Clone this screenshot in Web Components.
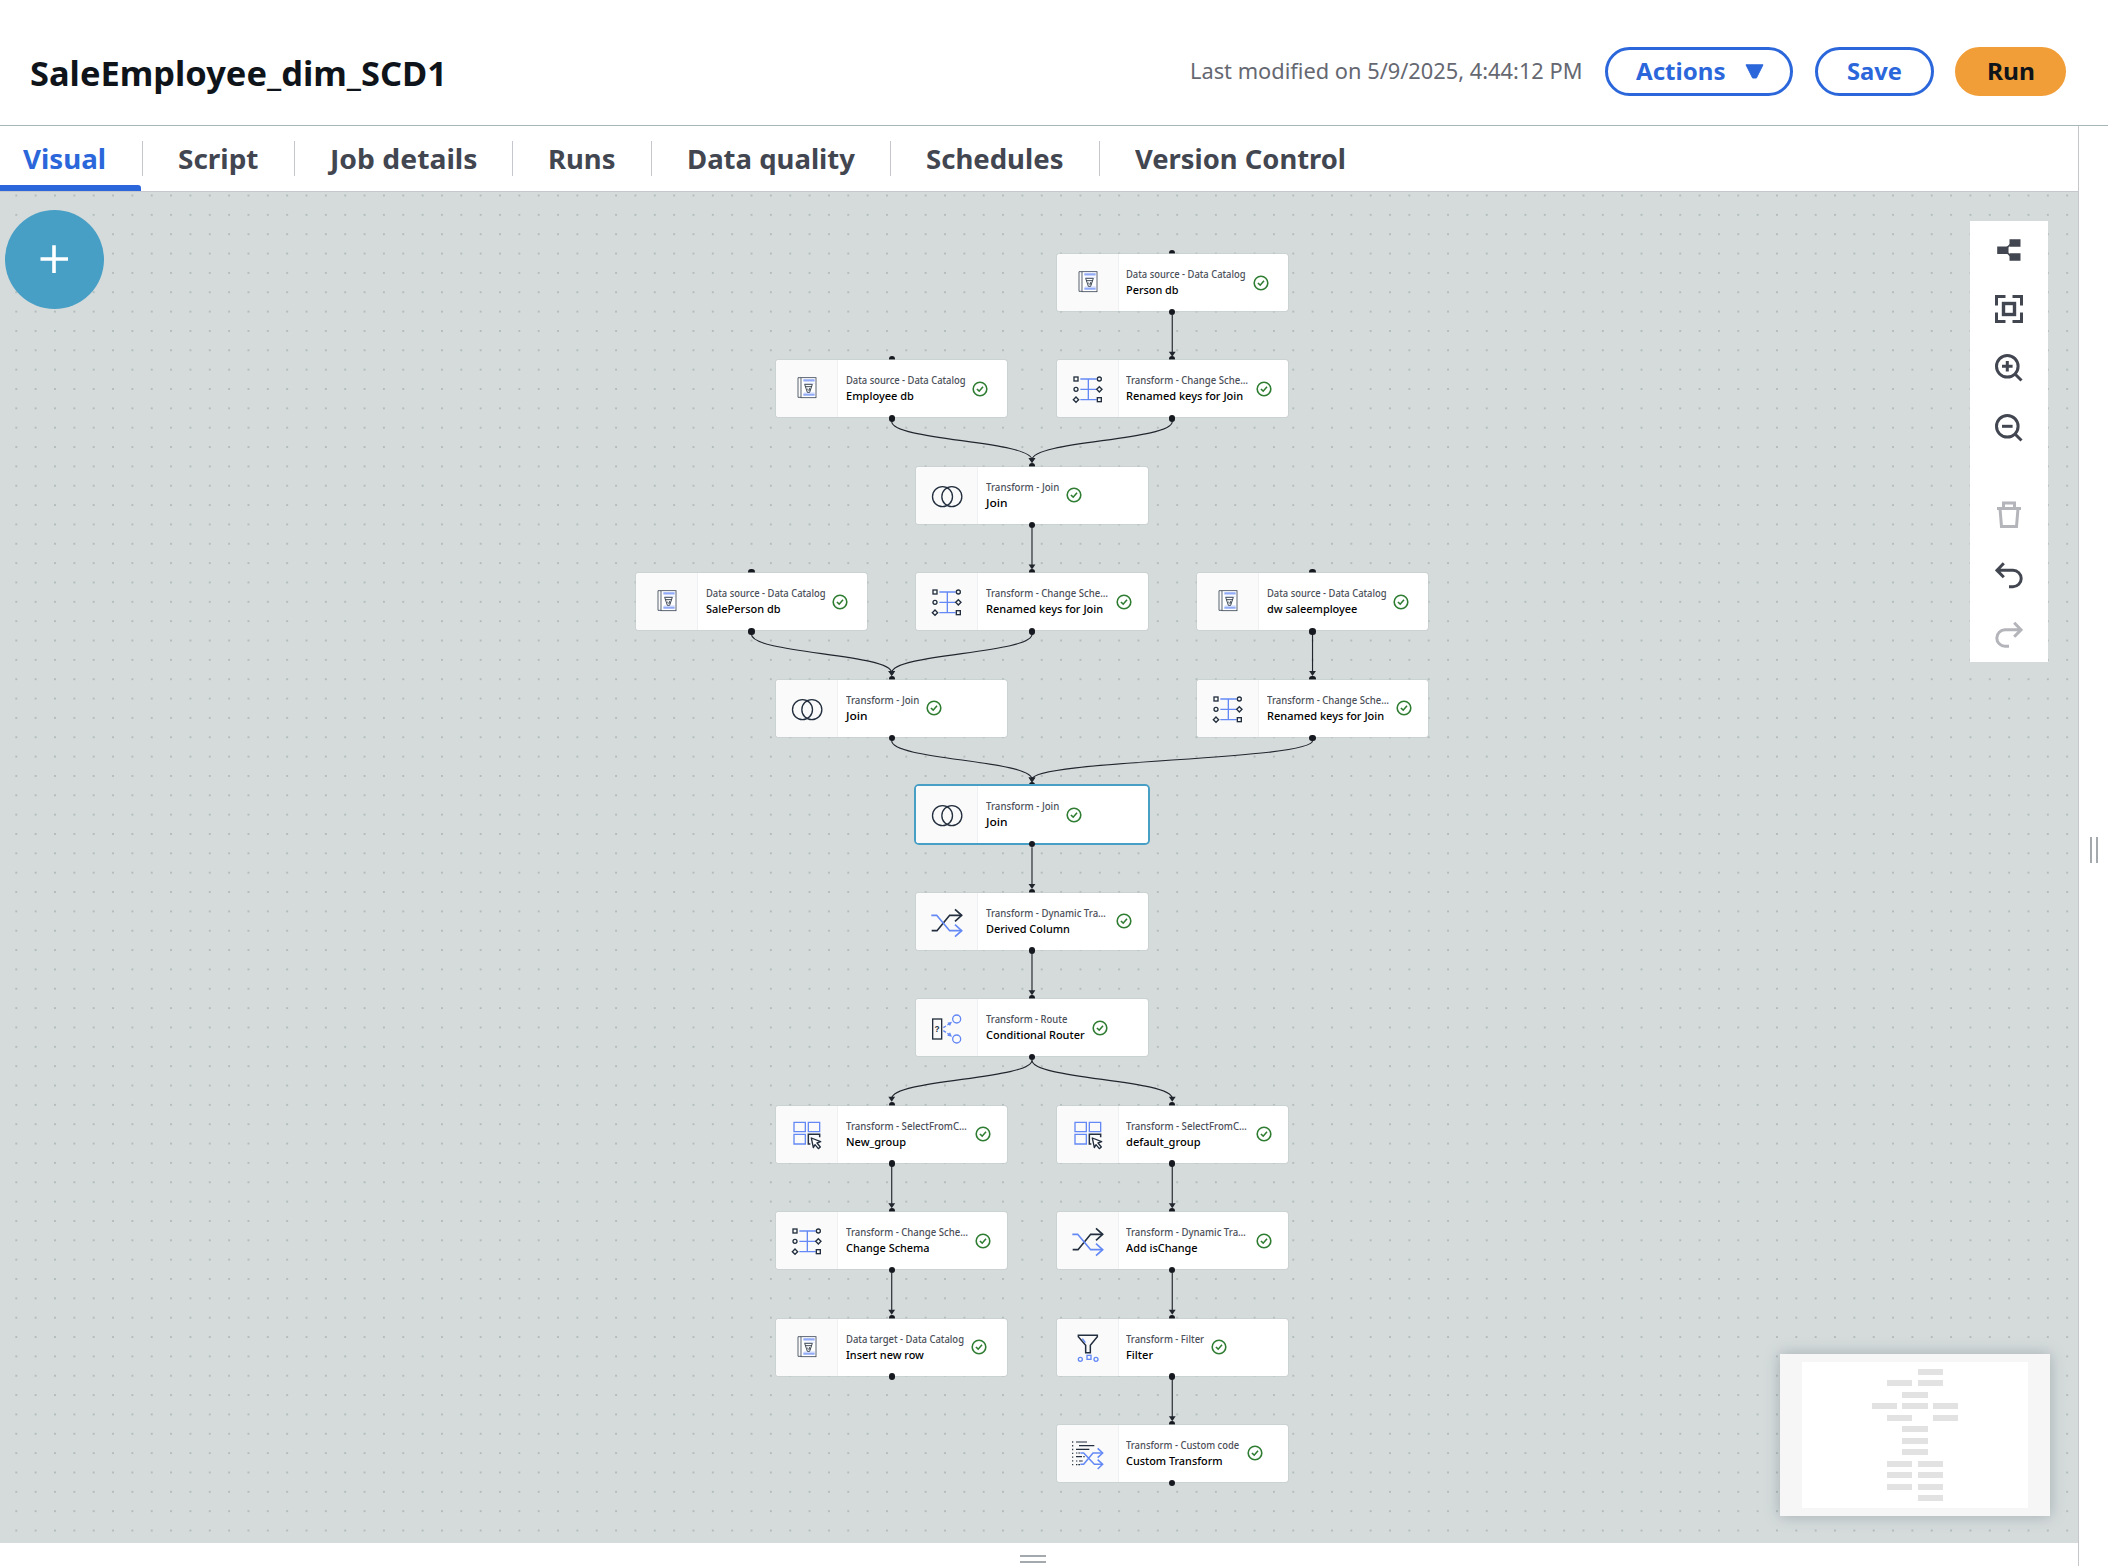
<!DOCTYPE html>
<html lang="en">
<head>
<meta charset="utf-8">
<title>SaleEmployee_dim_SCD1</title>
<style>
html,body{margin:0;height:100%;overflow:hidden;background:#fff}
body{font-family:"Noto Sans","Open Sans",sans-serif;color:#0f141a}
</style>
</head>
<body>
<job-editor></job-editor>
<script>
const define = (name, cls) => customElements.define(name, cls);

/* Text run squeezed or stretched to a given advance width. */
define('fit-text', class extends HTMLElement {
  connectedCallback() {
    const r = this.attachShadow({mode: 'open'});
    const w = +this.getAttribute('w');
    r.innerHTML = `<style>:host{display:block;flex:none;width:${w}px;white-space:pre}
      span{display:inline-block;transform-origin:0 50%;white-space:pre}</style><span>${this.getAttribute('text')}</span>`;
    const s = r.querySelector('span');
    const n = s.getBoundingClientRect().width;
    if (n) s.style.transform = `scaleX(${w / n})`;
  }
});

define('pill-button', class extends HTMLElement {
  connectedCallback() {
    const primary = this.hasAttribute('primary');
    this.attachShadow({mode: 'open'}).innerHTML = `<style>
      :host{display:block;flex:none}
      button{all:unset;box-sizing:border-box;display:flex;align-items:center;justify-content:center;gap:19px;
        width:${this.getAttribute('width')}px;height:49px;border-radius:25px;border:3px solid ${primary ? '#f19e38' : '#2b67db'};
        background:${primary ? '#f19e38' : '#fff'};color:${primary ? '#0f141a' : '#2b67db'};
        font-weight:700;font-size:24px;line-height:43px}
      fit-text{position:relative;top:-1px}
    </style><button><fit-text w="${this.getAttribute('w')}" text="${this.getAttribute('text')}"></fit-text><slot></slot></button>`;
  }
});

define('job-header', class extends HTMLElement {
  connectedCallback() {
    this.attachShadow({mode: 'open'}).innerHTML = `<style>
      :host{display:flex;box-sizing:border-box;height:126px;border-bottom:1px solid #aab7b8;background:#fff;
        padding:18px 42px 0 30px;align-items:flex-start;justify-content:space-between}
      h1{margin:31px 0 0;font-size:34px;line-height:48px;font-weight:700;color:#0f141a}
      .right{display:flex;margin-top:29px;align-items:center}
      .mod{font-size:21.5px;line-height:46px;color:#656871;margin-right:22px;position:relative;top:-1px}
      pill-button+pill-button{margin-left:22px}
      svg{display:block;flex:none;margin-right:-3px}
    </style>
    <h1><fit-text w="417" text="SaleEmployee_dim_SCD1"></fit-text></h1>
    <div class="right">
      <div class="mod"><fit-text w="392.5" text="Last modified on 5/9/2025, 4:44:12 PM"></fit-text></div>
      <pill-button width="188" w="89.5" text="Actions"><svg width="19" height="15" viewBox="0 0 19 15"><path d="M1 .8H18L11.4 14H7.6Z" fill="#2b67db" stroke="#2b67db" stroke-linejoin="round"/></svg></pill-button>
      <pill-button width="119" w="55" text="Save"></pill-button>
      <pill-button primary style="margin-left:21.5px" width="111" w="48" text="Run"></pill-button>
    </div>`;
  }
});

define('job-tabs', class extends HTMLElement {
  connectedCallback() {
    const tabs = [['Visual',83,142.5],['Script',80.5,152.5],['Job details',147.5,218],['Runs',67.5,138.7],['Data quality',168,239.2],['Schedules',137.5,209.2],['Version Control',211,284]];
    this.attachShadow({mode: 'open'}).innerHTML = `<style>
      :host{display:flex;box-sizing:border-box;height:66px;border-bottom:1px solid #c6c6cd;background:#fff}
      .tab{display:flex;box-sizing:border-box;flex:none;position:relative;padding:16px 0 0 35.3px;color:#424650;font-weight:700;font-size:26px;line-height:35px}
      .tab:not(:last-child)::after{content:"";position:absolute;right:0;top:15px;width:1px;height:35px;background:#c6c6cd}
      .tab.on{color:#2b67db;padding-left:23px}
      .tab.on::before{content:"";position:absolute;left:0;right:1.5px;bottom:0;height:6px;background:#2b67db;border-radius:0 3px 0 0}
    </style>` + tabs.map(([t, w, tw], i) => `<div class="tab${i ? '' : ' on'}" style="width:${tw}px"><fit-text w="${w}" text="${t}"></fit-text></div>`).join('');
  }
});

const D = '#232f3e', B = '#6489f5';
const shuffleHead = (y, c, x = 137) => `<path d="M${x-20} ${y-18}L${x} ${y}L${x-20} ${y+18}" stroke="${c}"/>`;
const NODE_ICONS = {
  catalog: `<g stroke="#414d5c" stroke-width="2.6"><path d="M75 53H66V112H75"/><rect x="75" y="53" width="45" height="60" fill="#fff"/></g>
    <path d="M82 61H116M82 104H116" stroke="#91aaf8" stroke-width="7"/><path d="M84 70H116M84 98H116" stroke="#dfe6fd" stroke-width="3"/>
    <path d="M86 73H109L101 97H94ZM88 80H107M95 86L97 92M101 84V92" stroke="${D}" stroke-width="2.6" fill="#fff"/>`,
  schema: `<path d="M70 57H119M70 88H118M70 119H119M94 57V119" stroke="${B}" stroke-width="4"/>
    <g stroke="${D}" stroke-width="4"><rect x="51" y="51" width="12" height="12"/><circle cx="127" cy="57" r="6"/><circle cx="57" cy="88" r="6"/>
    <path d="M127 80L135 88L127 96L119 88ZM57 111L65 119L57 127L49 119Z"/><rect x="121" y="113" width="12" height="12"/></g>`,
  join: `<g stroke="${D}" stroke-width="4"><circle cx="79.5" cy="89" r="30"/><circle cx="107.5" cy="89" r="30"/></g>`,
  shuffle: `<g stroke-width="5"><path d="M47 113H63L101 67H137" stroke="${D}"/>${shuffleHead(67, D)}
    <path d="M46 67H62L101 113H137" stroke="${B}"/>${shuffleHead(113, B)}</g>`,
  router: `<rect x="50" y="60" width="27" height="60" stroke="${D}" stroke-width="4"/>
    <text x="63.5" y="98" text-anchor="middle" font-family="Liberation Sans" font-weight="700" font-size="25" fill="${D}">?</text>
    <g stroke="${B}" stroke-width="4"><circle cx="122" cy="60" r="12"/><circle cx="122" cy="120" r="12"/>
    <path d="M82 86L90 81M94 78L99 75M82 95L90 100M94 103L99 106"/></g>
    <path d="M94 71L108 68L102 81ZM94 110L108 113L102 100Z" fill="${B}"/>`,
  select: `<g stroke-width="4"><path d="M54 49H88V77H54ZM97 49H131V77H97ZM54 85H88V114H54Z" stroke="${B}"/>
    <path d="M103 114H97V85H131V94" stroke="${D}" stroke-width="4.5"/>
    <path d="M106 96L134 107L123 111L133 123L127 128L117 116L112 125Z" stroke="${D}" fill="#fff" stroke-width="4" stroke-linejoin="round"/></g>`,
  filter: `<path d="M64 49H121V53L100 79V101H86V79L64 53Z" stroke="${D}" stroke-width="4.5"/><path d="M76 59L85 71" stroke="${B}" stroke-width="4.5"/>
    <g stroke="${B}" stroke-width="4"><circle cx="70" cy="121" r="6"/><rect x="90" y="109" width="12" height="12"/><circle cx="117" cy="121" r="6"/></g>`,
  custom: `<g stroke="${D}" stroke-width="3.5"><path d="M47 49V121" stroke-dasharray="4 7.3"/>
    <path d="M57 51H90M66 62H112M57 73H97M57 84H61M64 84H69M57 95H75M79 95H83M57 108H61M66 108H77M57 119H61M64 119H69"/></g>
    <g stroke="${B}" stroke-width="4.5"><path d="M70 84H80L112 118H136M70 118H80L108 84H136"/><path d="M122 70L137 84L122 98M122 104L137 118L122 132"/></g>`
};

define('flow-node', class extends HTMLElement {
  connectedCallback() {
    const a = n => this.getAttribute(n);
    const w = Math.max(+a('kw'), +a('nw')), box = /…/.test(a('kind')) ? 122 : w;
    this.attachShadow({mode: 'open'}).innerHTML = `<style>
      :host{display:block;position:absolute;width:231.4px;height:57px}
      .card{box-sizing:border-box;display:flex;height:57px;border-radius:3px;overflow:hidden;background:#fff}
      .frame{position:relative;border-radius:3px;box-shadow:0 0 0 1px #c3cbcc99}
      :host([selected]) .frame{box-shadow:0 0 0 2px #479fc6}
      .icon{flex:none;box-sizing:border-box;width:62px;height:57px;background:#fafafa;border-right:1px solid #eef0f1}
      .icon svg{display:block;width:62px;height:57px}
      .body{display:flex;align-items:flex-start;padding-left:7.8px}
      .texts{width:${box}px;padding-top:13px}
      .kind{font-size:9.9px;line-height:15px;color:#4b4f59;font-weight:500}
      .name{font-size:11.4px;line-height:16.6px;color:#000;font-weight:500}
      .ok{display:block;margin:20.5px 0 0 7.6px}
      .h{position:absolute;left:112.5px;width:6.4px;height:6.4px;border-radius:50%;background:#16191f}
      .top{top:-4px}.bot{top:54.8px}
    </style><i class="h top"></i><div class="frame"><div class="card"><div class="icon"><svg viewBox="0 0 186 171" fill="none">${NODE_ICONS[a('icon')]}</svg></div>
      <div class="body"><div class="texts"><div class="kind"><fit-text w="${+a('kw') + .6}" text="${a('kind')}"></fit-text></div>
      <div class="name"><fit-text w="${+a('nw') + .6}" text="${a('name')}"></fit-text></div></div>
      <svg class="ok" width="16" height="16" viewBox="0 0 16 16" fill="none" stroke="#2f7d32" stroke-width="1.6"><circle cx="8" cy="8" r="6.8"/><path d="M4.9 8L7.2 10.2L11 5.8"/></svg>
      </div></div></div><i class="h bot"></i>`;
  }
});

const K = {cat:['Data source - Data Catalog',119],tgt:['Data target - Data Catalog',117.4],join:['Transform - Join',72.7],sch:['Transform - Change Sche…',121.3],
  dyn:['Transform - Dynamic Tra…',119.3],route:['Transform - Route',80.7],sel:['Transform - SelectFromC…',120.2],fil:['Transform - Filter',77.5],cus:['Transform - Custom code',112.6]};
/* column, row, kind, icon, name, name width */
const NODES = [
  [3,0,'cat','catalog','Person db',52],
  [1,1,'cat','catalog','Employee db',67.3],[3,1,'sch','schema','Renamed keys for Join',116.6],
  [2,2,'join','join','Join',21],
  [0,3,'cat','catalog','SalePerson db',74],[2,3,'sch','schema','Renamed keys for Join',116.6],[4,3,'cat','catalog','dw saleemployee',89.8],
  [1,4,'join','join','Join',21],[4,4,'sch','schema','Renamed keys for Join',116.6],
  [2,5,'join','join','Join',21],
  [2,6,'dyn','shuffle','Derived Column',83.3],
  [2,7,'route','router','Conditional Router',98],
  [1,8,'sel','select','New_group',59.4],[3,8,'sel','select','default_group',74],
  [1,9,'sch','schema','Change Schema',83],[3,9,'dyn','shuffle','Add isChange',71],
  [1,10,'tgt','catalog','Insert new row',77.3],[3,10,'fil','filter','Filter',26.5],
  [3,11,'cus','custom','Custom Transform',96]];
const LINKS = [[3,0,3],[1,1,2],[3,1,2],[2,2,2],[0,3,1],[2,3,1],[4,3,4],[1,4,2],[4,4,2],[2,5,2],[2,6,2],[2,7,1],[2,7,3],[1,8,1],[3,8,3],[1,9,1],[3,9,3],[3,10,3]];
const TOP = 192;
const nx = c => 635.75 + c * 140.27, ny = r => 254 - TOP + r * 106.45;

define('flow-edges', class extends HTMLElement {
  connectedCallback() {
    const g = 19.348;
    const paths = LINKS.map(([c, r, c2]) => {
      const x1 = nx(c) + 115.7, y1 = ny(r) + 61, x2 = nx(c2) + 115.7, y2 = ny(r + 1) - 7, m = (y1 + y2) / 2;
      return `<path d="M${x1} ${y1}C${x1} ${m} ${x2} ${m} ${x2} ${y2}" fill="none" stroke="#21262e" stroke-width="1.15"/>
        <path d="M${x2 - 3.4} ${y2 - 1.8}H${x2 + 3.4}L${x2} ${y2 + 3.2}Z" fill="#21262e"/>`;
    }).join('');
    this.attachShadow({mode: 'open'}).innerHTML = `<style>:host{display:block;position:absolute;inset:0}svg{display:block;width:100%;height:100%}</style>
      <svg><defs><pattern id="dots" x="${16.3 - g / 2}" y="${195.5 - TOP - g / 2}" width="${g}" height="${g}" patternUnits="userSpaceOnUse"><circle cx="${g/2}" cy="${g/2}" r=".7" fill="#7f8b8c"/></pattern></defs>
      <rect width="100%" height="100%" fill="url(#dots)"/>${paths}</svg>`;
  }
});

define('canvas-toolbar', class extends HTMLElement {
  connectedCallback() {
    const lens = `<circle cx="12.3" cy="12.3" r="10.8"/><path d="M20 20L26.5 26.5"/>`;
    const icons = [
      [`<path d="M2.2 10.4H13.5V18H2.2ZM14.5 3.2H25.5V10.8H14.5ZM14.5 17.2H25.5V24.8H14.5Z" fill="currentColor" stroke="none"/><path d="M11.5 12L16.5 7.5M11.5 16L16.5 21" stroke-width="1.6"/>`],
      [`<path d="M1.5 10.5V1.5H10.5M17.5 1.5H26.5V10.5M26.5 17.5V26.5H17.5M10.5 26.5H1.5V17.5"/><rect x="8.5" y="8.5" width="11" height="11" stroke-width="3.4"/>`],
      [`${lens}<path d="M7 12.3H17.6M12.3 7V17.6"/>`],
      [`${lens}<path d="M7 12.3H17.6"/>`],
      [`<path d="M2 7.5H26M8.5 6V2H19.5V6M5 7.5L6.5 25.5H21.5L23 7.5"/>`, 'off gap'],
      [`<path d="M8.8 2.2L2 9.3L8.8 16.3M2 9.3H18A8.2 8.2 0 0 1 18 25.7H14"/>`],
      [`<path d="M19.2 2.7L26 9.8L19.2 16.8M26 9.8H10A8.2 8.2 0 0 0 10 26.2H14"/>`, 'off']];
    this.attachShadow({mode: 'open'}).innerHTML = `<style>
      :host{display:flex;flex-direction:column;position:absolute;right:30px;top:29px;width:78px;height:441px;box-sizing:border-box;background:#fff;color:#424650}
      div{height:59.6px;flex:none;display:flex;align-items:center;justify-content:center}
      div:first-of-type{height:58px}
      .off{color:#b4b4bb}.gap{margin-top:27.6px}
      svg{display:block}
    </style>` + icons.map(([p, c = '']) => `<div class="${c}"><svg width="28" height="28" viewBox="0 0 28 28" fill="none" stroke="currentColor" stroke-width="3">${p}</svg></div>`).join('');
  }
});

define('mini-map', class extends HTMLElement {
  connectedCallback() {
    const xs = [92, 107, 122, 138, 153], ys = [15, 26, 38, 49, 61, 72, 84, 95, 107, 118, 130, 141];
    this.attachShadow({mode: 'open'}).innerHTML = `<style>
      :host{display:block;position:absolute;right:28px;bottom:27px;width:270px;height:162px;background:#f6f6f6;box-shadow:0 0 14px #5a6b7866}
      svg{display:block}</style>
      <svg width="270" height="162" shape-rendering="crispEdges"><rect x="22" y="8" width="226" height="146" fill="#fff"/>` +
      NODES.map(([c, r]) => `<rect x="${xs[c]}" y="${ys[r]}" width="${c === 2 ? 26 : 25}" height="6" fill="#e2e2e2"/>`).join('') + `</svg>`;
  }
});

define('add-node-button', class extends HTMLElement {
  connectedCallback() {
    this.attachShadow({mode: 'open'}).innerHTML = `<style>
      :host{display:block;position:absolute;left:5px;top:18px;width:99px;height:99px;border-radius:50%;background:#479fc6}
      svg{display:block}</style>
      <svg width="99" height="99"><path d="M35.5 49H63M49 35.3V63" stroke="#fff" stroke-width="3.6"/></svg>`;
  }
});

define('flow-canvas', class extends HTMLElement {
  connectedCallback() {
    this.attachShadow({mode: 'open'}).innerHTML = `<style>
      :host{display:block;position:relative;flex:1;background:#d5dbdb;overflow:hidden}
      </style><flow-edges></flow-edges>` +
      NODES.map(([c, r, k, icon, name, nw]) => `<flow-node style="left:${nx(c)}px;top:${ny(r)}px" kind="${K[k][0]}" kw="${K[k][1]}" icon="${icon}" name="${name}" nw="${nw}"${r === 5 ? ' selected' : ''}></flow-node>`).join('') +
      `<add-node-button></add-node-button><canvas-toolbar></canvas-toolbar><mini-map></mini-map>`;
  }
});

define('resize-grip', class extends HTMLElement {
  connectedCallback() {
    this.attachShadow({mode: 'open'}).innerHTML = `<style>
      :host{display:flex;gap:4px;flex-direction:column}
      :host([vertical]){flex-direction:row}
      i{display:block;width:26px;height:2px;background:#a3a9ad}
      :host([vertical]) i{width:2px;height:26px}</style><i></i><i></i>`;
  }
});

define('job-editor', class extends HTMLElement {
  connectedCallback() {
    this.attachShadow({mode: 'open'}).innerHTML = `<style>
      :host{display:flex;flex-direction:column;width:2108px;height:1566px;background:#fff}
      .work{flex:1;display:flex;min-height:0}
      .main{flex:1;display:flex;flex-direction:column}
      .side{box-sizing:border-box;width:30px;border-left:1px solid #c6c6cd;display:flex;align-items:center;justify-content:center;padding-top:8px}
      .foot{height:23px;display:flex;justify-content:center;padding-right:12px;box-sizing:border-box}
      .foot resize-grip{margin-top:12px}
    </style>
    <job-header></job-header>
    <div class="work"><div class="main"><job-tabs></job-tabs><flow-canvas></flow-canvas><div class="foot"><resize-grip></resize-grip></div></div>
    <div class="side"><resize-grip vertical></resize-grip></div></div>`;
  }
});
</script>
</body>
</html>
